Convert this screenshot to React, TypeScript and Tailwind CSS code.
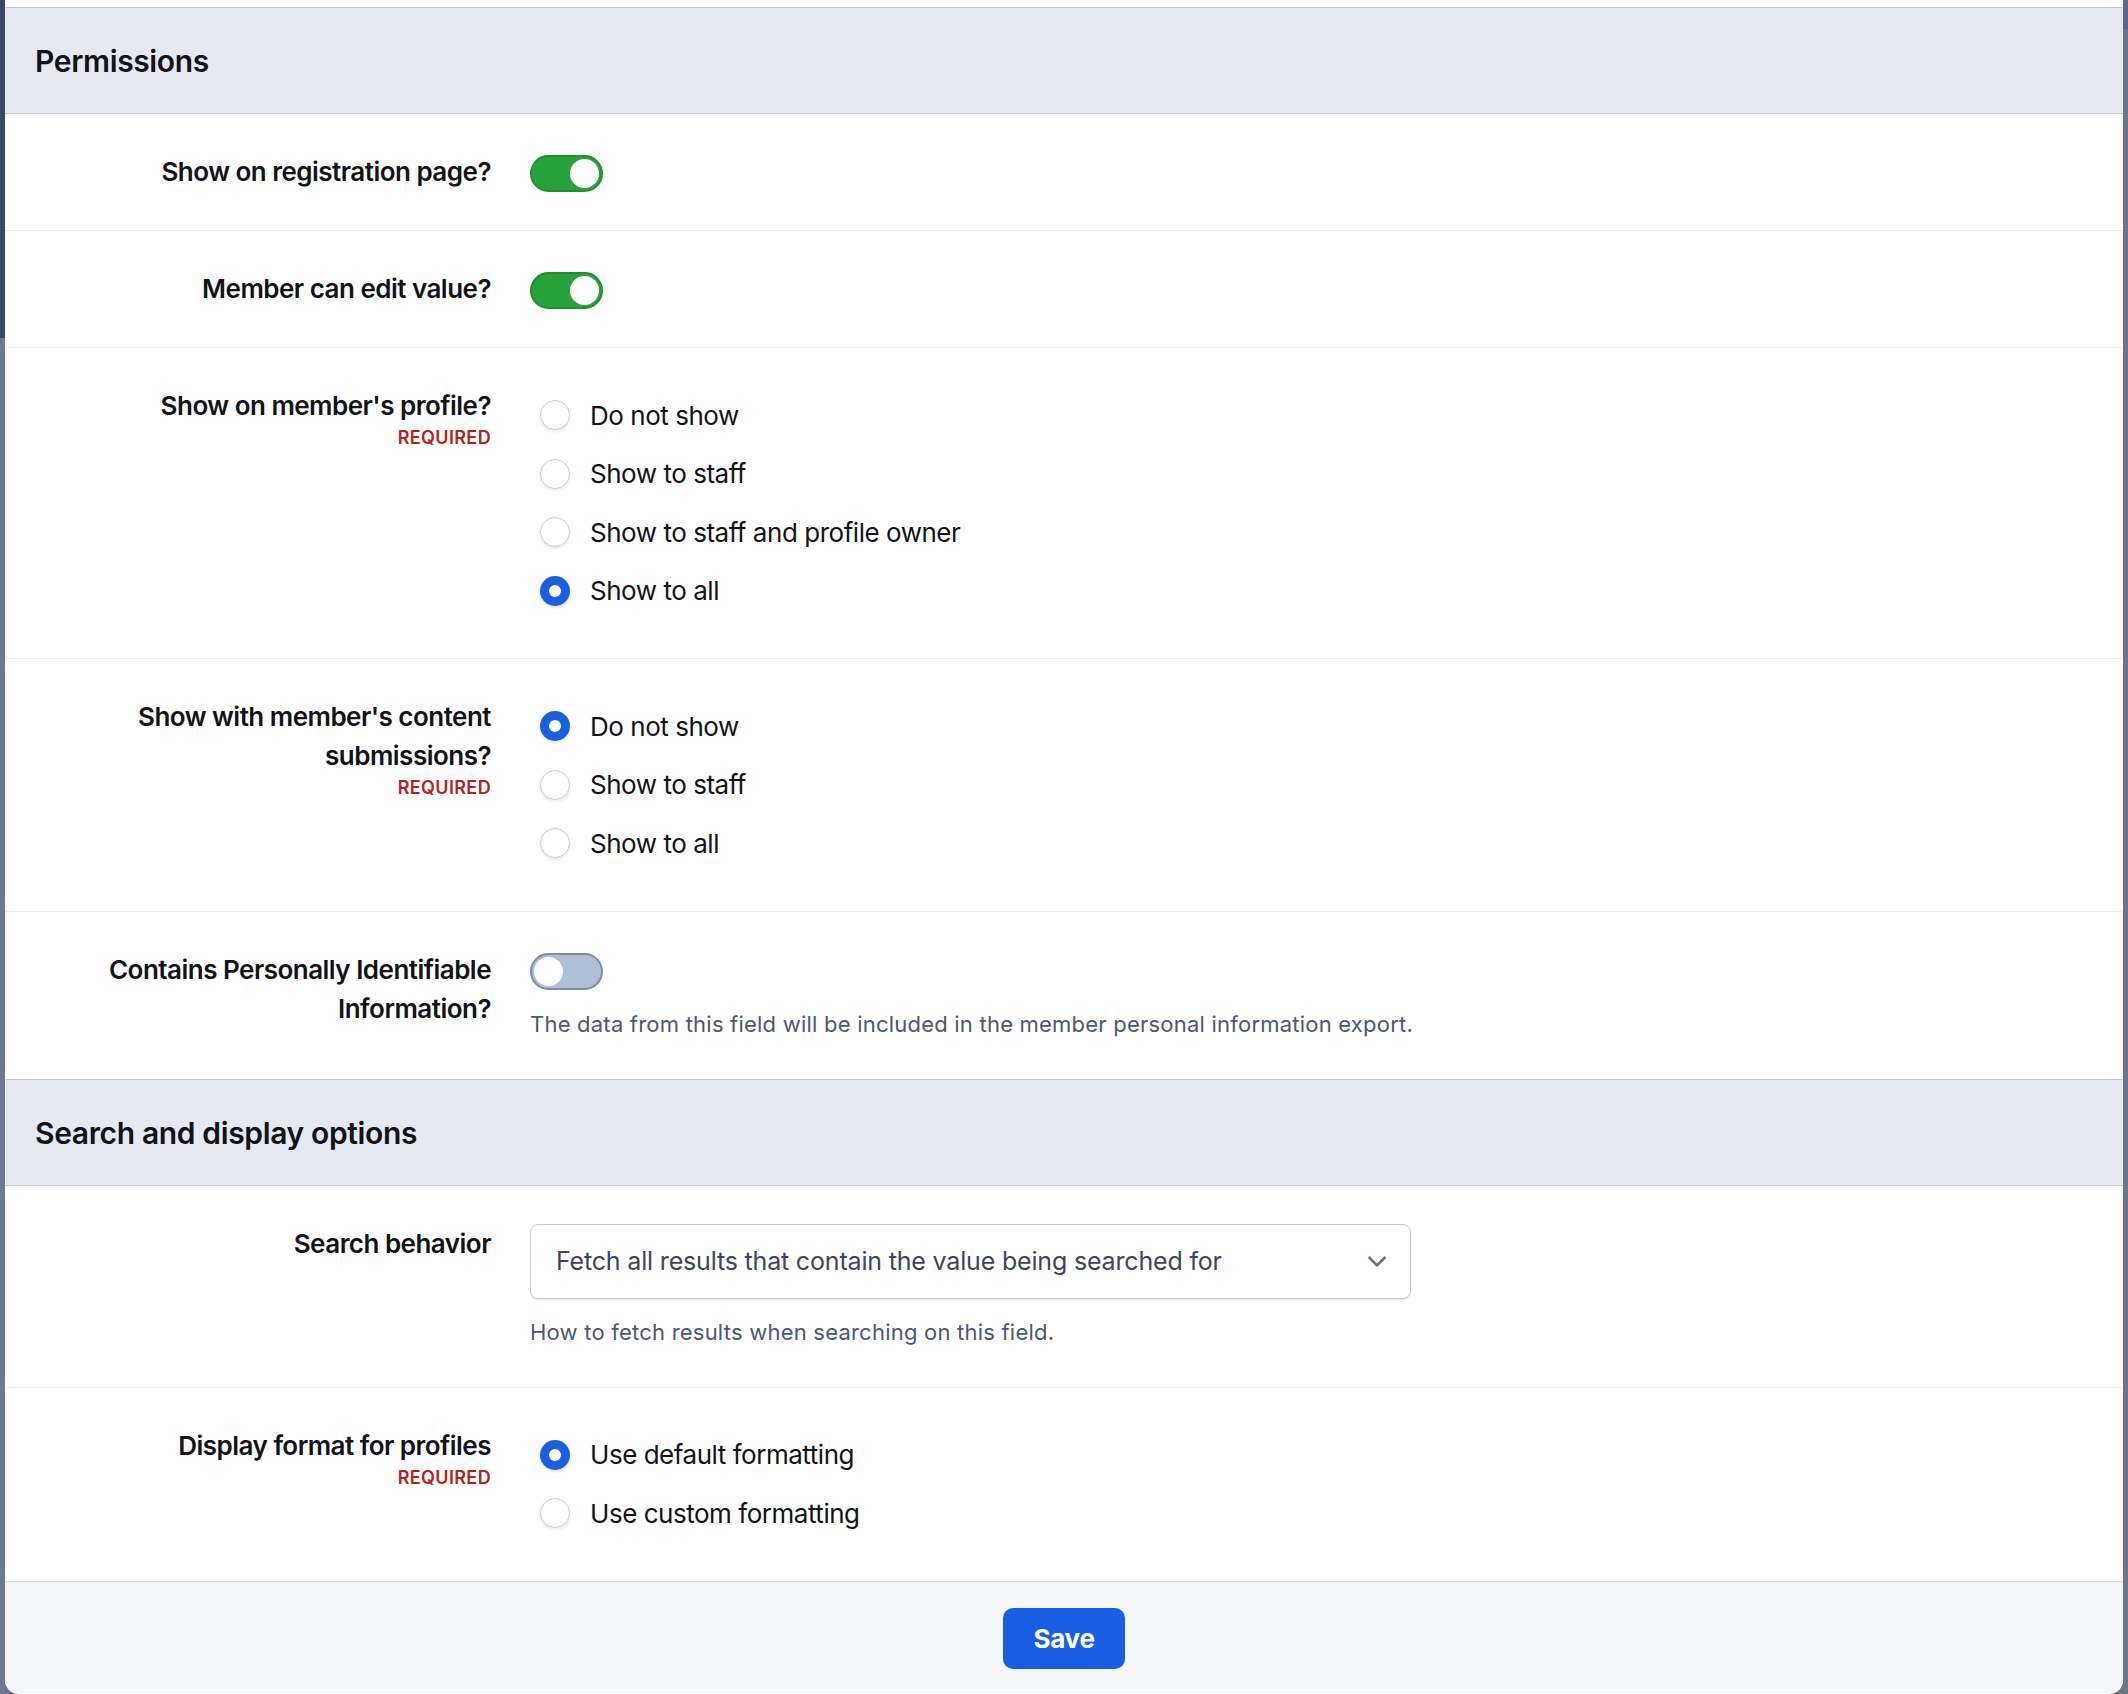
import React from "react";

function Toggle({ on }: { on: boolean }) {
  return on ? (
    <div className="mt-[3px] flex h-[37px] w-[73px] items-center justify-end rounded-full border-2 border-[#1f8f33] bg-[#28a33b] pr-[2px]">
      <div className="h-[29px] w-[29px] rounded-full bg-white" />
    </div>
  ) : (
    <div className="mt-[3px] flex h-[37px] w-[73px] items-center justify-start rounded-full border-2 border-[#7b8dab] bg-[#b1bfd6] pl-[2px]">
      <div className="h-[29px] w-[29px] rounded-full bg-white" />
    </div>
  );
}

function Radio({ checked, label }: { checked?: boolean; label: string }) {
  return (
    <div className="flex h-[58.5px] items-center gap-[20px] pl-[10px]">
      {checked ? (
        <div className="flex h-[30px] w-[30px] items-center justify-center rounded-full bg-[#1a5fe2] shadow-[0_2px_3px_rgba(0,0,0,0.12)]">
          <div className="h-[12px] w-[12px] rounded-full bg-white" />
        </div>
      ) : (
        <div className="h-[30px] w-[30px] rounded-full border-[1.5px] border-[#c9cdd7] bg-white shadow-[0_2px_3px_rgba(0,0,0,0.08)]" />
      )}
      <span className="text-[26px] leading-[39px] tracking-[-0.018em] text-[#111318]">{label}</span>
    </div>
  );
}

function Row({
  label,
  required,
  children,
  last,
}: {
  label: string;
  required?: boolean;
  children: React.ReactNode;
  last?: boolean;
}) {
  return (
    <div className={"flex py-[38px] " + (last ? "" : "border-b border-[#ebedf0]")}>
      <div className="w-[486px] shrink-0 pl-[30px] text-right">
        <div className="text-[26px] font-semibold leading-[39px] tracking-[-0.02em] text-[#111318]">{label}</div>
        {required && (
          <div className="text-[18px] font-semibold leading-[25px] tracking-[0.02em] text-[#b3231d]">REQUIRED</div>
        )}
      </div>
      <div className="flex-1 pl-[39px]">{children}</div>
    </div>
  );
}

function SectionHeader({ title }: { title: string }) {
  return (
    <div className="border-y border-[#c3cbd9] bg-[#e5e9f1] px-[30px] pb-[29px] pt-[31px]">
      <h2 className="text-[30px] font-semibold leading-[45px] tracking-[-0.012em] text-[#111318]">{title}</h2>
    </div>
  );
}

export default function App() {
  return (
    <div className="flex min-h-screen bg-[#6b7489] font-['Inter','Liberation_Sans',sans-serif] antialiased">
      <div className="flex w-[5px] shrink-0 flex-col">
        <div className="h-[338px] bg-[#3b4764]" />
        <div className="flex-1 bg-[#6e7891]" />
      </div>
      <div className="flex flex-1 flex-col overflow-hidden rounded-b-[14px] bg-white pt-[7px]">
        <SectionHeader title="Permissions" />
        <Row label="Show on registration page?">
          <Toggle on />
        </Row>
        <Row label="Member can edit value?">
          <Toggle on />
        </Row>
        <Row label="Show on member's profile?" required>
          <Radio label="Do not show" />
          <Radio label="Show to staff" />
          <Radio label="Show to staff and profile owner" />
          <Radio label="Show to all" checked />
        </Row>
        <Row label="Show with member's content submissions?" required>
          <Radio label="Do not show" checked />
          <Radio label="Show to staff" />
          <Radio label="Show to all" />
        </Row>
        <Row label="Contains Personally Identifiable Information?" last>
          <Toggle on={false} />
          <p className="mt-[18px] text-[22px] leading-[33px] tracking-[0.01em] text-[#4a5878]">
            The data from this field will be included in the member personal information export.
          </p>
        </Row>
        <SectionHeader title="Search and display options" />
        <Row label="Search behavior">
          <div className="flex h-[75px] w-[881px] items-center justify-between rounded-[8px] border border-[#c5cbd6] bg-white pl-[25px] pr-[20px] shadow-[0_2px_2px_rgba(0,0,0,0.06)]">
            <span className="text-[25px] leading-[39px] tracking-[-0.007em] text-[#3b4560]">
              Fetch all results that contain the value being searched for
            </span>
            <svg width="26" height="26" viewBox="0 0 24 24" fill="none" stroke="#6b7280" strokeWidth="2.4" strokeLinecap="round" strokeLinejoin="round">
              <polyline points="5 9 12 16 19 9" />
            </svg>
          </div>
          <p className="mt-[17px] text-[22px] leading-[33px] tracking-[0.01em] text-[#4a5878]">
            How to fetch results when searching on this field.
          </p>
        </Row>
        <Row label="Display format for profiles" required last>
          <Radio label="Use default formatting" checked />
          <Radio label="Use custom formatting" />
        </Row>
        <div className="flex justify-center border-t border-[#d8dde8] bg-[#f6f7f9] pb-[24px] pt-[26px]">
          <button className="h-[61px] rounded-[10px] bg-[#1a5fe3] px-[30px] text-[26px] font-bold tracking-[-0.01em] text-white">
            Save
          </button>
        </div>
      </div>
      <div className="flex w-[5px] shrink-0 flex-col">
        <div className="h-[29px] bg-[#5f6880]" />
        <div className="flex-1 bg-[#6b7489]" />
      </div>
    </div>
  );
}
